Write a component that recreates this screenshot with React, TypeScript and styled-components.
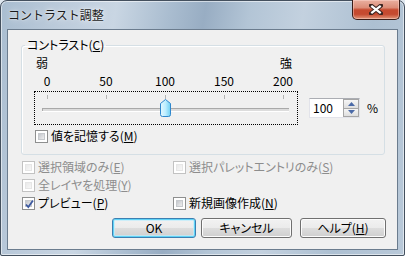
import styled, { createGlobalStyle, css } from 'styled-components'

const GlobalStyle = createGlobalStyle`
	html, body {
		margin: 0;
		padding: 0;
		width: 405px;
		height: 256px;
		overflow: hidden;
		background: #dfe7ef;
	}
	body {
		font-family: 'Noto Sans CJK JP', sans-serif;
		font-size: 12px;
		color: #000;
	}
`

const uiFont = css`
	font-family: 'Noto Sans CJK JP', sans-serif;
	font-size: 12px;
	line-height: 14px;
	font-feature-settings: 'palt';
`

const Window = styled.div`
	box-sizing: border-box;
	width: 405px;
	height: 256px;
	display: flex;
	flex-direction: column;
	padding: 0 6px 5px 6px;
	border: 1px solid #44505e;
	border-radius: 7px 7px 2px 2px;
	background: linear-gradient(
		100deg,
		#a9bdd0 0%,
		#bccbdb 14%,
		#c9d6e3 26%,
		#aabdd0 38%,
		#98adc3 46%,
		#b3c5d6 56%,
		#c3d1df 68%,
		#adc0d2 84%,
		#b9c9d9 100%
	);
	box-shadow: inset 0 0 0 1px rgba(255, 255, 255, 0.55);
`

const TitleBar = styled.div`
	height: 28px;
	display: flex;
	justify-content: space-between;
	align-items: flex-start;
`

const Title = styled.div`
	font-family: 'Noto Sans CJK JP', sans-serif;
	font-size: 12px;
	line-height: 12px;
	padding: 8px 0 0 1px;
	color: #1b1b1b;
	text-shadow: 0 0 6px rgba(255, 255, 255, 0.9), 0 0 2px rgba(255, 255, 255, 0.8);
`

const CloseButton = styled.div`
	box-sizing: border-box;
	width: 48px;
	height: 20px;
	margin: -1px -2px 0 0;
	display: flex;
	align-items: center;
	justify-content: center;
	border: 1px solid #3a1d18;
	border-top: none;
	border-radius: 0 0 5px 5px;
	background: linear-gradient(
		#eab0a0 0%,
		#dc8d78 40%,
		#c64a2f 52%,
		#c54a30 75%,
		#e29679 100%
	);
	box-shadow: inset 0 0 0 1px rgba(255, 220, 210, 0.45);
`

const Client = styled.div`
	flex: 1;
	display: flex;
	flex-direction: column;
	background: #f0f0f0;
	border: 1px solid #6b7c8e;
`

const Group = styled.fieldset`
	margin: 8px 12px 0 13px;
	padding: 0 0 11px 0;
	min-width: 0;
	border: 1px solid #d5dfe5;
	border-radius: 3px;
	box-shadow: inset 1px 1px 0 #fff;
`

const Legend = styled.legend`
	${uiFont};
	margin-left: 3px;
	padding: 0 2px;
`

const ScaleEnds = styled.div`
	${uiFont};
	margin: 4px 0 0 14px;
	width: 256px;
	display: flex;
	justify-content: space-between;
	font-feature-settings: normal;
`

const ScaleNumbers = styled.div`
	${uiFont};
	margin: 4px 0 0 10px;
	width: 266px;
	display: flex;
	justify-content: space-between;
`

const ScaleNumber = styled.span`
	width: 30px;
	text-align: center;
`

const SliderRow = styled.div`
	margin: 3px 0 0 12px;
	display: flex;
	align-items: center;
`

const SliderBox = styled.div`
	position: relative;
	box-sizing: border-box;
	width: 264px;
	height: 34px;
	border: 1px dotted #000;
`

const Ticks = styled.div`
	margin: 3px 13px 0 12px;
	height: 4px;
	display: flex;
	justify-content: space-between;
`

const Tick = styled.span`
	width: 1px;
	height: 4px;
	background: #b4b4b4;
`

const Track = styled.div`
	margin: 9px 8px 0 7px;
	height: 2px;
	border-top: 1px solid #a9a9a9;
	border-left: 1px solid #a9a9a9;
	background: #dcdcdc;
	box-shadow: 0 1px 0 #fff;
`

const Thumb = styled.svg`
	position: absolute;
	top: 7px;
	width: 11px;
	height: 18px;
`

const Spin = styled.div`
	margin-left: 11px;
	box-sizing: border-box;
	width: 51px;
	height: 20px;
	display: flex;
	background: #fff;
	border: 1px solid #e2e3ea;
	border-top-color: #abadb3;
`

const SpinText = styled.div`
	${uiFont};
	flex: 1;
	padding: 2px 0 0 3px;
`

const SpinButtons = styled.div`
	width: 16px;
	display: flex;
	flex-direction: column;
	gap: 0;
`

const SpinButton = styled.div`
	flex: 1;
	display: flex;
	align-items: center;
	justify-content: center;
	box-sizing: border-box;
	border: 1px solid #a6a6a6;
	background: linear-gradient(#f6f6f6, #dedede);
	& + & {
		border-top: none;
	}
`

const Percent = styled.span`
	${uiFont};
	margin-left: 7px;
`

const CheckRow = styled.label<{ $disabled?: boolean }>`
	${uiFont};
	display: flex;
	align-items: center;
	gap: 3px;
	height: 14px;
	color: ${(p) => (p.$disabled ? '#8d8d8d' : '#000')};
	u {
		text-decoration-thickness: 1px;
	}
`

const Box = styled.span<{ $disabled?: boolean }>`
	box-sizing: border-box;
	width: 13px;
	height: 13px;
	flex: none;
	display: flex;
	align-items: center;
	justify-content: center;
	padding: 2px;
	background: #fff;
	border: 1px solid ${(p) => (p.$disabled ? '#c2c2c2' : '#8e8f8f')};
	position: relative;
	&::before {
		content: '';
		width: 100%;
		height: 100%;
		box-sizing: border-box;
		border: 1px solid ${(p) => (p.$disabled ? '#e6e6e6' : '#c6c9cd')};
		background: ${(p) =>
			p.$disabled
				? 'linear-gradient(135deg, #e9e9e9, #f7f7f7)'
				: 'linear-gradient(135deg, #c4c7cc, #eeeeef)'};
	}
	svg {
		position: absolute;
		left: 1px;
		top: 1px;
	}
`

const RememberRow = styled.div`
	margin: 4px 0 0 13px;
`

const Options = styled.div`
	margin: 5px 0 0 14px;
	display: grid;
	grid-template-columns: 151px 1fr;
	row-gap: 4px;
`

const Buttons = styled.div`
	margin: 8px 11px 0 0;
	display: flex;
	justify-content: flex-end;
`

const Button = styled.div<{ $w: number; $gap?: number; $default?: boolean }>`
	${uiFont};
	box-sizing: border-box;
	width: ${(p) => p.$w}px;
	height: 20px;
	margin-left: ${(p) => p.$gap ?? 0}px;
	display: flex;
	align-items: center;
	justify-content: center;
	font-feature-settings: 'palt';
	border-radius: 3px;
	border: 1px solid ${(p) => (p.$default ? '#3c7fb1' : '#707070')};
	background: linear-gradient(#f2f2f2 0%, #ebebeb 50%, #dddddd 51%, #cfcfcf 100%);
	box-shadow: ${(p) =>
		p.$default
			? 'inset 0 0 0 1px #5fd3f7, inset 0 0 0 2px rgba(190, 236, 252, 0.7)'
			: 'inset 0 0 0 1px #fcfcfc'};
`

function Check({
	children,
	checked,
	disabled,
}: {
	children: React.ReactNode
	checked?: boolean
	disabled?: boolean
}) {
	return (
		<CheckRow $disabled={disabled}>
			<Box $disabled={disabled}>
				{checked && (
					<svg width="11" height="11" viewBox="0 0 11 11">
						<path
							d="M2 5.5 L4.3 8 L9 1.5"
							fill="none"
							stroke="#3d5aa0"
							strokeWidth="1.8"
						/>
					</svg>
				)}
			</Box>
			<span>{children}</span>
		</CheckRow>
	)
}

const ticks = [0, 50, 100, 150, 200]

export default function App() {
	const value = 100
	// thumb center runs from tick 0 (x=12) to tick 200 (x=248)
	const thumbLeft = 12 + ((248 - 12) * value) / 200 - 5

	return (
		<>
			<GlobalStyle />
			<Window>
				<TitleBar>
					<Title>コントラスト調整</Title>
					<CloseButton>
						<svg width="14" height="11" viewBox="0 0 14 11">
							<path
								d="M2 1.5 L12 9.5 M12 1.5 L2 9.5"
								stroke="#3b2420"
								strokeWidth="4.2"
								strokeLinecap="square"
							/>
							<path
								d="M2.3 1.8 L11.7 9.2 M11.7 1.8 L2.3 9.2"
								stroke="#fff"
								strokeWidth="2.2"
							/>
						</svg>
					</CloseButton>
				</TitleBar>
				<Client>
					<Group>
						<Legend>
							コントラスト(<u>C</u>)
						</Legend>
						<ScaleEnds>
							<span>弱</span>
							<span>強</span>
						</ScaleEnds>
						<ScaleNumbers>
							{ticks.map((t) => (
								<ScaleNumber key={t}>{t}</ScaleNumber>
							))}
						</ScaleNumbers>
						<SliderRow>
							<SliderBox>
								<Ticks>
									{ticks.map((t) => (
										<Tick key={t} />
									))}
								</Ticks>
								<Track />
								<Thumb viewBox="0 0 11 18" style={{ left: thumbLeft }}>
									<defs>
										<linearGradient id="thumbFill" x1="0" y1="0" x2="1" y2="0">
											<stop offset="0" stopColor="#e4f8ff" />
											<stop offset="0.5" stopColor="#bdeeff" />
											<stop offset="1" stopColor="#6fd0f3" />
										</linearGradient>
									</defs>
									<path
										d="M5.5 0.5 L10.5 4.5 V15.5 Q10.5 17.5 8.5 17.5 H2.5 Q0.5 17.5 0.5 15.5 V4.5 Z"
										fill="url(#thumbFill)"
										stroke="#2f87cd"
									/>
								</Thumb>
							</SliderBox>
							<Spin>
								<SpinText>100</SpinText>
								<SpinButtons>
									<SpinButton>
										<svg width="7" height="4" viewBox="0 0 7 4">
											<path d="M0 4 L3.5 0 L7 4 Z" fill="#4b6aa8" />
										</svg>
									</SpinButton>
									<SpinButton>
										<svg width="7" height="4" viewBox="0 0 7 4">
											<path d="M0 0 L3.5 4 L7 0 Z" fill="#4b6aa8" />
										</svg>
									</SpinButton>
								</SpinButtons>
							</Spin>
							<Percent>%</Percent>
						</SliderRow>
						<RememberRow>
							<Check>
								値を記憶する(<u>M</u>)
							</Check>
						</RememberRow>
					</Group>
					<Options>
						<Check disabled>
							選択領域のみ(<u>E</u>)
						</Check>
						<Check disabled>
							選択パレットエントリのみ(<u>S</u>)
						</Check>
						<Check disabled>
							全レイヤを処理(<u>Y</u>)
						</Check>
						<span />
						<Check checked>
							プレビュー(<u>P</u>)
						</Check>
						<Check>
							新規画像作成(<u>N</u>)
						</Check>
					</Options>
					<Buttons>
						<Button $w={84} $default>
							OK
						</Button>
						<Button $w={91} $gap={5}>
							キャンセル
						</Button>
						<Button $w={86} $gap={8}>
							ヘルプ(<u>H</u>)
						</Button>
					</Buttons>
				</Client>
			</Window>
		</>
	)
}
